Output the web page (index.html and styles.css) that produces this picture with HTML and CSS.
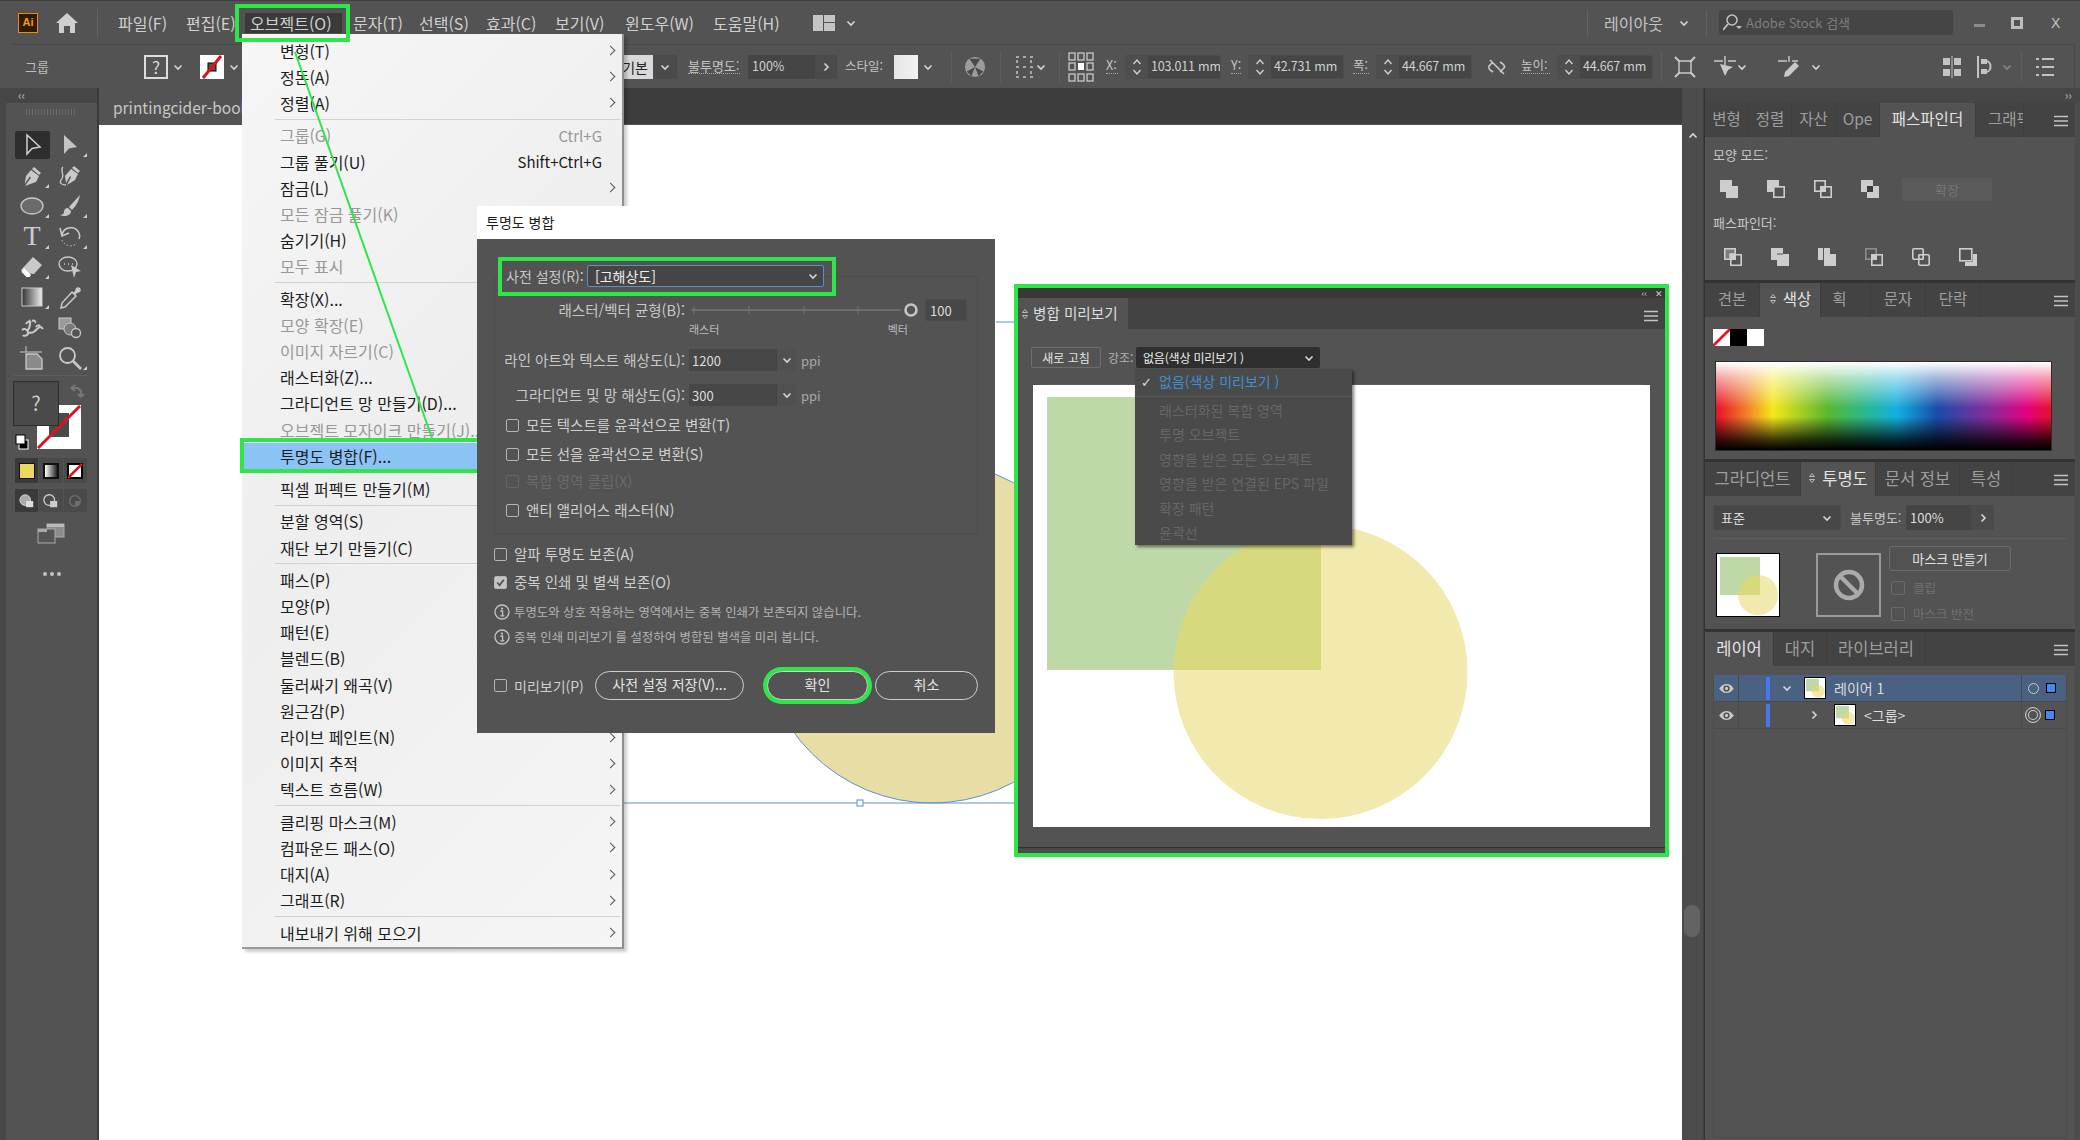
FILE: index.html
```html
<!DOCTYPE html>
<html lang="ko">
<head>
<meta charset="utf-8">
<title>투명도 병합</title>
<link rel="stylesheet" href="styles.css">
</head>
<body>
<svg class="defs" aria-hidden="true">
  <defs>
    <clipPath id="thumbclip"><rect x="3" y="3" width="40" height="38"/></clipPath>
    <clipPath id="prevclip"><rect x="14" y="12" width="274" height="273"/></clipPath>
    <symbol id="cd" viewBox="0 0 12 12"><path d="M2.5 4.5 6 8l3.5-3.5" fill="none" stroke="#d6d6d6" stroke-width="1.6"/></symbol>
    <symbol id="cr" viewBox="0 0 12 12"><path d="M4.5 2.5 8 6l-3.5 3.5" fill="none" stroke="#d6d6d6" stroke-width="1.6"/></symbol>
    <symbol id="menu3" viewBox="0 0 14 12"><path d="M0 1.5h14M0 6h14M0 10.500h14" stroke="#c4c4c4" stroke-width="1.6"/></symbol>
    <symbol id="eye" viewBox="0 0 18 12"><path d="M1 6c2.500-3.500 5-5 8-5s5.500 1.500 8 5c-2.500 3.500-5 5-8 5S3.500 9.500 1 6Z" fill="#c9c9c9"/><circle cx="9" cy="6" r="3.400" fill="#4a4a4a"/><circle cx="9" cy="6" r="1.800" fill="#c9c9c9"/></symbol>
    <symbol id="art" viewBox="0 0 62 62">
      <rect width="62" height="62" fill="#fff"/>
      <circle cx="41" cy="41" r="20" fill="#f2e9ae"/>
      <rect x="3" y="3" width="40" height="38" fill="#bfd8a8"/>
      <circle cx="41" cy="41" r="20" fill="#d7d97f" clip-path="url(#thumbclip)"/>
    </symbol>
    <symbol id="info" viewBox="0 0 16 16"><circle cx="8" cy="8" r="7" fill="none" stroke="#c4c4c4" stroke-width="1.300"/><circle cx="8" cy="4.600" r="1.100" fill="#c4c4c4"/><path d="M6.300 7h2.300v4.500M6.300 11.800h4" fill="none" stroke="#c4c4c4" stroke-width="1.300"/></symbol>
    <symbol id="stepper" viewBox="0 0 12 22"><path d="M2.500 8 6 4l3.500 4M2.500 14 6 18l3.500-4" fill="none" stroke="#d0d0d0" stroke-width="1.400"/></symbol>
    <symbol id="updown" viewBox="0 0 8 14"><path d="M1.500 5.500 4 2.500l2.500 3ZM1.500 8.500 4 11.500l2.500-3Z" fill="none" stroke="#bbb"/></symbol>
    <!-- pathfinder -->
    <symbol id="pf1" viewBox="0 0 18 18"><path d="M0 0h12v6h6v12H6v-6H0Z" fill="#cdcdcd"/></symbol>
    <symbol id="pf2" viewBox="0 0 18 18"><path d="M0 0h12v6H6v6H0Z" fill="#cdcdcd"/><rect x="6.800" y="6.800" width="10.400" height="10.400" fill="none" stroke="#cdcdcd" stroke-width="1.600"/></symbol>
    <symbol id="pf3" viewBox="0 0 18 18"><rect x=".8" y=".8" width="10.400" height="10.400" fill="none" stroke="#cdcdcd" stroke-width="1.600"/><rect x="6.800" y="6.800" width="10.400" height="10.400" fill="none" stroke="#cdcdcd" stroke-width="1.600"/><rect x="6" y="6" width="6" height="6" fill="#cdcdcd"/></symbol>
    <symbol id="pf4" viewBox="0 0 18 18"><path d="M0 0h12v6h6v12H6v-6H0Z" fill="#cdcdcd"/><rect x="6" y="6" width="6" height="6" fill="#3c3c3c"/></symbol>
    <symbol id="pd1" viewBox="0 0 18 18"><path d="M.8.8h10.400v5.200h-5.200v5.200H.8Z" fill="#7b7b7b" stroke="#cdcdcd" stroke-width="1.600"/><rect x="6" y="6" width="6" height="6" fill="#cdcdcd"/><path d="M12 6.800h5.200v10.400H6.800V12" fill="none" stroke="#cdcdcd" stroke-width="1.600"/></symbol>
    <symbol id="pd2" viewBox="0 0 18 18"><path d="M0 0h12v6H6v6H0Z" fill="#cdcdcd"/><rect x="6" y="6" width="12" height="12" fill="#cdcdcd"/><path d="M6 6h6" stroke="#555"/></symbol>
    <symbol id="pd3" viewBox="0 0 18 18"><path d="M0 0h12v6h6v12H6v-6H0Z" fill="#cdcdcd"/><path d="M5.500 0v12" stroke="#555"/></symbol>
    <symbol id="pd4" viewBox="0 0 18 18"><rect x=".8" y=".8" width="10.400" height="10.400" fill="none" stroke="#8c8c8c" stroke-width="1.600"/><rect x="6.800" y="6.800" width="10.400" height="10.400" fill="none" stroke="#cdcdcd" stroke-width="1.600"/><rect x="6" y="6" width="6" height="6" fill="#cdcdcd"/></symbol>
    <symbol id="pd5" viewBox="0 0 18 18"><rect x=".8" y=".8" width="10.400" height="10.400" rx="1" fill="none" stroke="#cdcdcd" stroke-width="1.600"/><rect x="6.800" y="6.800" width="10.400" height="10.400" rx="1" fill="none" stroke="#cdcdcd" stroke-width="1.600"/><rect x="6.800" y="6.800" width="4.400" height="4.400" fill="none" stroke="#cdcdcd"/></symbol>
    <symbol id="pd6" viewBox="0 0 18 18"><rect x=".8" y=".8" width="12" height="12" fill="#535353" stroke="#cdcdcd" stroke-width="1.600"/><path d="M14 6h4v12H6v-4h8Z" fill="#cdcdcd"/></symbol>
    <!-- tools -->
    <symbol id="t-sel" viewBox="0 0 24 24"><path d="M6 2v19l5-5.500 8-1.500Z" fill="#2e2e2e" stroke="#d0d0d0" stroke-width="1.500"/></symbol>
    <symbol id="t-dir" viewBox="0 0 24 24"><path d="M6 2v19l5-5.500 8-1.500Z" fill="#c4c4c4"/></symbol>
    <symbol id="t-pen" viewBox="0 0 24 24"><path d="m14 3 7 6-2 2-7-6Z" fill="#c9c9c9"/><path d="m11 6 8 6-3 6-11 4 6-8.500-1.300-1-5 7.500L6 12Z" fill="#c9c9c9"/></symbol>
    <symbol id="t-curv" viewBox="0 0 24 24"><path d="m16 2 6 5-2 2-6-5Z" fill="#c9c9c9"/><path d="m13 5 7 5-3 6-8 5 4-8-1-1-4 7-1-7Z" fill="#c9c9c9"/><path d="M5 3C1 6 8 11 3 16c-2 3 1 5 5 5" fill="none" stroke="#c9c9c9" stroke-width="1.300"/></symbol>
    <symbol id="t-ell" viewBox="0 0 24 24"><ellipse cx="12" cy="12" rx="11" ry="8" fill="#6b6b6b" stroke="#c9c9c9" stroke-width="1.300"/></symbol>
    <symbol id="t-brush" viewBox="0 0 24 24"><path d="M22 1 11 13l3 3C19 11 21 6 22 1Z" fill="#c9c9c9"/><path d="M10 14c-3 0-4 2-4 4 0 2-2 3-4 3 4 2 11 1 11-4Z" fill="#c9c9c9"/></symbol>
    <symbol id="t-rot" viewBox="0 0 24 24"><path d="M4 11A9 9 0 0 1 21 9c1 2 1 4 0 6" fill="none" stroke="#c9c9c9" stroke-width="1.600"/><path d="m2 4 2 8 7-3" fill="none" stroke="#c9c9c9" stroke-width="1.600"/><path d="M4 16a9 9 0 0 0 15 3" fill="none" stroke="#c9c9c9" stroke-dasharray="1.500 2"/></symbol>
    <symbol id="t-era" viewBox="0 0 24 24"><path d="m13 2 9 8-8 9-11-1-2-3Z" fill="#c9c9c9"/><path d="m4 13 7 7-1.500 2-3 0-5-5Z" fill="#fff"/></symbol>
    <symbol id="t-pup" viewBox="0 0 24 24"><ellipse cx="10" cy="9" rx="9" ry="7" fill="none" stroke="#c9c9c9" stroke-width="1.400"/><path d="M6 9h1M10 9h1M14 9h1" stroke="#c9c9c9" stroke-width="1.600"/><path d="m13 10 10 6-5 1-2 6Z" fill="#c9c9c9"/></symbol>
    <linearGradient id="gr1" x1="0" x2="1" y1="0" y2="0"><stop offset="0" stop-color="#333"/><stop offset="1" stop-color="#eee"/></linearGradient>
    <symbol id="t-grad" viewBox="0 0 24 24"><rect x="2" y="3" width="20" height="18" fill="url(#gr1)" stroke="#c9c9c9"/></symbol>
    <symbol id="t-drop" viewBox="0 0 24 24"><path d="m15 8 2-2 1-3c1-1 3-1 4 0s1 3 0 4l-3 1-2 2-2-2Z" fill="#c9c9c9"/><path d="m14 7 4 4L7 22l-4 1 1-5Z" fill="none" stroke="#c9c9c9" stroke-width="1.500"/></symbol>
    <symbol id="t-blend" viewBox="0 0 24 24"><path d="M2 14c2-2 5-1 6 2s-4 5-5 3M9 4c2 2 1 7-1 10s4 4 7 1 5-6 8-2M12 5c2-1 4 0 3 2M6 8c1-2 3-3 5-2M16 11c1-2 3-2 4-1" fill="none" stroke="#c9c9c9" stroke-width="2"/></symbol>
    <symbol id="t-shape" viewBox="0 0 24 24"><rect x="1" y="2" width="12" height="11" fill="#9a9a9a" stroke="#c9c9c9"/><circle cx="12" cy="13" r="6" fill="#7a7a7a" stroke="#c9c9c9"/><circle cx="18" cy="17" r="4.500" fill="#535353" stroke="#c9c9c9" stroke-width="1.300"/></symbol>
    <symbol id="t-art" viewBox="0 0 24 24"><path d="M6 0v6H0M6 6h16" stroke="#c9c9c9" fill="none"/><path d="M6 8h11l5 5v10H6Z" fill="#8a8a8a" stroke="#c9c9c9" stroke-width="1.300"/></symbol>
    <symbol id="t-zoom" viewBox="0 0 24 24"><circle cx="9.500" cy="9.500" r="7.500" fill="none" stroke="#c9c9c9" stroke-width="1.800"/><path d="m15 15 8 8" stroke="#c9c9c9" stroke-width="2.600"/></symbol>
  </defs>
</svg>

<div class="app">
  <header class="menubar">
    <div class="logo">Ai</div>
    <svg class="home" viewBox="0 0 22 20"><path d="M11 0 0 10h3v10h5v-7h6v7h5V10h3Z" fill="#cfcfcf"/></svg>
    <div class="vsep homesep"></div>
    <nav class="menus">
      <span>파일(F)</span><span>편집(E)</span><span class="on">오브젝트(O)</span><span>문자(T)</span><span>선택(S)</span><span>효과(C)</span><span>보기(V)</span><span>윈도우(W)</span><span>도움말(H)</span>
    </nav>
    <svg class="wsicon" viewBox="0 0 22 16"><path d="M0 0h10v16H0ZM11 0h11v7H11ZM11 8h11v8H11Z" fill="#c4c4c4"/></svg>
    <svg class="ic12 ml10"><use href="#cd"/></svg>
    <div class="spring"></div>
    <div class="vsep tall"></div>
    <span class="layout">레이아웃</span>
    <svg class="ic12 ml10"><use href="#cd"/></svg>
    <div class="vsep tall end"></div>
    <div class="stock">
      <svg class="mag" viewBox="0 0 20 18"><circle cx="9" cy="6" r="5" fill="none" stroke="#c4c4c4" stroke-width="1.500"/><path d="M5 10 0 16" stroke="#c4c4c4" stroke-width="1.800"/><path d="m13 12 6 0-3 3Z" fill="#c4c4c4"/></svg>
      <span>Adobe Stock 검색</span>
    </div>
    <div class="winbtns"><i class="wmin"></i><i class="wmax"></i><b>X</b></div>
  </header>

  <div class="ctrlbar">
    <span class="c-group">그룹</span>
    <div class="qbox">?</div><svg class="ic12 mx"><use href="#cd"/></svg>
    <svg class="strokebox" viewBox="0 0 24 24"><rect width="24" height="24" fill="#fff"/><rect x="8" y="8" width="8" height="8" fill="#555" stroke="#000"/><path d="M3 23 21 1" stroke="#d9141c" stroke-width="3"/></svg><svg class="ic12 mx"><use href="#cd"/></svg>
    <div class="basic">기본</div><div class="chevbox"><svg class="ic12"><use href="#cd"/></svg></div>
    <span class="ulabel c-op">불투명도:</span>
    <div class="opbox"><span>100%</span><i><svg class="ic12"><use href="#cr"/></svg></i></div>
    <span class="c-style">스타일:</span>
    <div class="swatch"></div><svg class="ic12 mx"><use href="#cd"/></svg>
    <div class="vsep short ml13"></div>
    <svg class="globe" viewBox="0 0 24 24"><circle cx="12" cy="12" r="11" fill="#9c9c9c"/><path d="M12 12 6 3h12ZM12 12l9 5-5 5ZM12 12 3 17l5 5Z" fill="#4a4a4a"/></svg>
    <div class="vsep short ml14"></div>
    <svg class="ic20 ml14" viewBox="0 0 20 22"><path d="M1 1h3M8 1h3M15 1h3M1 11h3M8 11h3M15 11h3M1 21h3M8 21h3M15 21h3M2 4v3M2 15v3M16 4v3M16 15v3" stroke="#c4c4c4" stroke-width="1.500"/></svg>
    <svg class="ic12"><use href="#cd"/></svg>
    <div class="vsep short ml12"></div>
    <svg class="refpt" viewBox="0 0 26 30"><g fill="none" stroke="#c9c9c9" stroke-width="1.300"><rect x="1" y="1" width="6" height="7"/><rect x="10" y="1" width="6" height="7"/><rect x="19" y="1" width="6" height="7"/><rect x="1" y="11" width="6" height="7"/><rect x="19" y="11" width="6" height="7"/><rect x="1" y="22" width="6" height="7"/><rect x="10" y="22" width="6" height="7"/><rect x="19" y="22" width="6" height="7"/></g><rect x="10" y="11" width="6" height="7" fill="#fff"/></svg>
    <span class="ulabel c-x">X:</span>
    <div class="numbox"><svg class="step"><use href="#stepper"/></svg><span>103.011 mm</span></div>
    <span class="ulabel c-y">Y:</span>
    <div class="numbox"><svg class="step"><use href="#stepper"/></svg><span>42.731 mm</span></div>
    <span class="ulabel c-w">폭:</span>
    <div class="numbox"><svg class="step"><use href="#stepper"/></svg><span>44.667 mm</span></div>
    <svg class="link" viewBox="0 0 20 16"><path d="M6 3 2 7c-1 2 0 3 1 4l3 2M13 3l3 2c2 2 2 3 1 4l-4 4M3 1l14 14" fill="none" stroke="#c9c9c9" stroke-width="1.600"/></svg>
    <span class="ulabel c-h">높이:</span>
    <div class="numbox"><svg class="step"><use href="#stepper"/></svg><span>44.667 mm</span></div>
    <div class="vsep short ml8"></div>
    <svg class="ic22 ml12" viewBox="0 0 22 22"><path d="M5 5h12v12H5Z" fill="none" stroke="#c9c9c9" stroke-width="1.400"/><path d="M1 1l5 5M21 1l-5 5M1 21l5-5M21 21l-5-5" stroke="#c9c9c9" stroke-width="2"/></svg>
    <svg class="ic22 ml18" viewBox="0 0 22 22"><path d="M0 5h9M14 5h8M11 0v9" stroke="#c9c9c9" stroke-width="1.400"/><path d="m6 8 13 3-5 3-3 6Z" fill="#c9c9c9"/></svg>
    <svg class="ic12"><use href="#cd"/></svg>
    <svg class="ic22 ml30" viewBox="0 0 22 22"><path d="M0 5h9M14 5h6M11 0v6" stroke="#c9c9c9" stroke-width="1.400"/><path d="m17 6 4 4-10 10-5 1 1-5Z" fill="#c9c9c9"/></svg>
    <svg class="ic12 ml10"><use href="#cd"/></svg>
    <div class="spring"></div>
    <svg class="ic18" viewBox="0 0 18 22"><path d="M0 2h7v7H0ZM11 2h7v7h-7ZM0 13h7v7H0ZM11 13h7v7h-7Z" fill="#c4c4c4"/><path d="M9 0v22" stroke="#c4c4c4"/></svg>
    <svg class="ic18 ml16" viewBox="0 0 18 22"><path d="M1 0v22" stroke="#c4c4c4" stroke-width="2"/><path d="M4 3h6v5H4ZM4 13h6v5H4Z" fill="#c4c4c4"/><path d="M9 5c6 0 6 11 0 11" fill="none" stroke="#c4c4c4" stroke-width="2"/></svg>
    <svg class="ic12 dim ml6"><use href="#cd"/></svg>
    <div class="vsep short ml8"></div>
    <svg class="ic18 ml14" viewBox="0 0 18 20"><path d="M0 2h3M6 2h12M0 10h3M6 10h12M0 18h3M6 18h12" stroke="#c4c4c4" stroke-width="2"/></svg>
  </div>

  <div class="workarea">
    <aside class="toolbar">
      <div class="strip"><span>‹‹</span></div>
      <div class="grip"></div>
      <div class="tools">
        <div class="tool sel"><svg><use href="#t-sel"/></svg></div>
        <div class="tool more"><svg><use href="#t-dir"/></svg></div>
        <div class="tool more"><svg><use href="#t-pen"/></svg></div>
        <div class="tool"><svg><use href="#t-curv"/></svg></div>
        <div class="tool more"><svg><use href="#t-ell"/></svg></div>
        <div class="tool more"><svg><use href="#t-brush"/></svg></div>
        <div class="tool more ttext">T</div>
        <div class="tool more"><svg><use href="#t-rot"/></svg></div>
        <div class="tool more"><svg><use href="#t-era"/></svg></div>
        <div class="tool"><svg><use href="#t-pup"/></svg></div>
        <div class="tool more"><svg><use href="#t-grad"/></svg></div>
        <div class="tool"><svg><use href="#t-drop"/></svg></div>
        <div class="tool"><svg><use href="#t-blend"/></svg></div>
        <div class="tool"><svg><use href="#t-shape"/></svg></div>
        <div class="tool"><svg><use href="#t-art"/></svg></div>
        <div class="tool more"><svg><use href="#t-zoom"/></svg></div>
      </div>
      <div class="tsep"></div>
      <div class="fillstroke">
        <svg class="fs-stroke" viewBox="0 0 44 44"><rect width="44" height="44" fill="#fff"/><rect x="12" y="8" width="20" height="24" fill="#4a4a4a"/><path d="M1 43 43 1" stroke="#d9141c" stroke-width="3"/></svg>
        <div class="fs-fill">?</div>
        <svg class="fs-swap" viewBox="0 0 16 14"><path d="M1 4h7l3 3v6M1 4l4-3M1 4l4 3M11 13l-3-3M11 13l3-3" fill="none" stroke="#777" stroke-width="2"/></svg>
        <svg class="fs-def" viewBox="0 0 14 16"><rect x="4" y="6" width="9" height="9" fill="#000" stroke="#fff"/><rect x="1" y="1" width="9" height="9" fill="#fff" stroke="#000"/></svg>
      </div>
      <div class="modes">
        <div class="mode on"><i class="m-yellow"></i></div>
        <div class="mode"><i class="m-grad"></i></div>
        <div class="mode"><svg class="m-none" viewBox="0 0 16 16"><rect x="1" y="1" width="14" height="14" fill="#fff" stroke="#000" stroke-width="2"/><path d="M1 15 15 1" stroke="#d9141c" stroke-width="2.500"/></svg></div>
      </div>
      <div class="modes draw">
        <div class="mode on"><svg class="m-none" viewBox="0 0 18 16"><circle cx="7" cy="7" r="6" fill="#aaa" stroke="#ddd"/><rect x="8" y="8" width="8" height="7" fill="#ddd"/></svg></div>
        <div class="mode"><svg class="m-none" viewBox="0 0 18 16"><circle cx="7" cy="7" r="6" fill="none" stroke="#ccc" stroke-width="1.500"/><rect x="8" y="8" width="8" height="7" fill="#ccc"/></svg></div>
        <div class="mode"><svg class="m-none" viewBox="0 0 18 16"><circle cx="9" cy="8" r="6" fill="none" stroke="#707070" stroke-width="1.500"/><path d="M9 8h5v5H9Z" fill="#707070"/></svg></div>
      </div>
      <svg class="screen" viewBox="0 0 28 21"><rect x="10" y="1" width="17" height="13" fill="#8c8c8c" stroke="#aaa"/><path d="M10 1h17v3H10Z" fill="#bbb"/><rect x="1" y="6" width="17" height="14" fill="#555" stroke="#aaa"/><path d="M1 6h9v3H1Z" fill="#aaa"/></svg>
      <div class="dots"><i></i><i></i><i></i></div>
    </aside>

    <main class="center">
      <div class="doctabs"><div class="doctab">printingcider-book</div></div>
      <div class="canvas">
        <svg class="artwork" viewBox="0 0 1584 1015">
          <circle cx="833" cy="507.500" r="170.500" fill="#e7dea5" stroke="#5b8fd6"/>
          <path d="M524 678H920" stroke="#5b8fd6"/>
          <rect x="758" y="675" width="6" height="6" fill="#fff" stroke="#5b8fd6"/>
          <path d="M897 197h20" stroke="#5b8fd6"/>
        </svg>
      </div>
    </main>

    <div class="vscroll">
      <svg class="ic12"><use href="#cd"/></svg>
      <div class="vthumb"></div>
    </div>

    <aside class="right">
      <div class="strip rstrip"><span>››</span></div>
      <section class="panel p1">
        <div class="tabs">
          <span class="tab w44">변형</span><span class="tab w43">정렬</span><span class="tab w44">자산</span><span class="tab w44">Ope</span><span class="tab active w96">패스파인더</span><span class="tab w48 clip">그래픽</span>
          <svg class="pmenu"><use href="#menu3"/></svg>
        </div>
        <div class="p-body">
          <div class="plabel">모양 모드:</div>
          <div class="pfrow r1">
            <svg class="pf"><use href="#pf1"/></svg><svg class="pf"><use href="#pf2"/></svg><svg class="pf"><use href="#pf3"/></svg><svg class="pf"><use href="#pf4"/></svg>
            <div class="expand">확장</div>
          </div>
          <div class="plabel l2">패스파인더:</div>
          <div class="pfrow r2">
            <svg class="pf"><use href="#pd1"/></svg><svg class="pf"><use href="#pd2"/></svg><svg class="pf"><use href="#pd3"/></svg><svg class="pf"><use href="#pd4"/></svg><svg class="pf"><use href="#pd5"/></svg><svg class="pf"><use href="#pd6"/></svg>
          </div>
        </div>
      </section>
      <section class="panel p2">
        <div class="tabs">
          <span class="tab w55">견본</span><span class="tab active w61"><svg class="ud"><use href="#updown"/></svg>색상</span><span class="tab w50 stroke">획</span><span class="tab w55">문자</span><span class="tab w55">단락</span>
          <svg class="pmenu"><use href="#menu3"/></svg>
        </div>
        <div class="p-body">
          <div class="swatches">
            <svg class="sw" viewBox="0 0 16 16"><rect width="16" height="16" fill="#fff"/><path d="M0 16 16 0" stroke="#e0141c" stroke-width="2.500"/></svg><i class="sw black"></i><i class="sw white"></i>
          </div>
          <div class="spectrum"></div>
        </div>
      </section>
      <section class="panel p3">
        <div class="tabs">
          <span class="tab w96b">그라디언트</span><span class="tab active w75"><svg class="ud"><use href="#updown"/></svg>투명도</span><span class="tab w84">문서 정보</span><span class="tab w53">특성</span>
          <svg class="pmenu"><use href="#menu3"/></svg>
        </div>
        <div class="p-body">
          <div class="blendrow">
            <div class="blend"><span>표준</span><svg class="ic12"><use href="#cd"/></svg></div>
            <span class="oplabel">불투명도:</span>
            <div class="opfield"><span>100%</span><i><svg class="ic12"><use href="#cr"/></svg></i></div>
          </div>
          <div class="hline"></div>
          <div class="maskrow">
            <svg class="mthumb"><use href="#art"/></svg>
            <div class="nomask"><svg viewBox="0 0 32 32"><circle cx="16" cy="16" r="13" fill="none" stroke="#aaa" stroke-width="4.500"/><path d="M7 7l18 18" stroke="#aaa" stroke-width="4.500"/></svg></div>
            <div class="maskctl">
              <div class="maskbtn">마스크 만들기</div>
              <div class="mcheck"><i></i>클립</div>
              <div class="mcheck"><i></i>마스크 반전</div>
            </div>
          </div>
        </div>
      </section>
      <section class="panel p4">
        <div class="tabs">
          <span class="tab active w69">레이어</span><span class="tab w53b">대지</span><span class="tab w99">라이브러리</span>
          <svg class="pmenu"><use href="#menu3"/></svg>
        </div>
        <div class="p-body">
          <div class="layers">
            <div class="lrow cur">
              <div class="eyecell"><svg><use href="#eye"/></svg></div>
              <i class="lbar"></i>
              <svg class="ic12 lchev"><use href="#cd"/></svg>
              <svg class="lthumb"><use href="#art"/></svg>
              <span class="lname">레이어 1</span>
              <div class="ltail"><i class="ring"></i><i class="lsq"></i></div>
            </div>
            <div class="lrow sub">
              <div class="eyecell"><svg><use href="#eye"/></svg></div>
              <i class="lbar"></i>
              <svg class="ic12 lchev"><use href="#cr"/></svg>
              <svg class="lthumb"><use href="#art"/></svg>
              <span class="lname">&lt;그룹&gt;</span>
              <div class="ltail"><i class="ring dbl"></i><i class="lsq"></i></div>
            </div>
          </div>
        </div>
      </section>
    </aside>
  </div>
</div>

<div class="objmenu">
  <div class="mi"><span>변형(T)</span><i class="arr"></i></div>
  <div class="mi"><span>정돈(A)</span><i class="arr"></i></div>
  <div class="mi"><span>정렬(A)</span><i class="arr"></i></div>
  <hr>
  <div class="mi dis"><span>그룹(G)</span><em>Ctrl+G</em></div>
  <div class="mi"><span>그룹 풀기(U)</span><em>Shift+Ctrl+G</em></div>
  <div class="mi"><span>잠금(L)</span><i class="arr"></i></div>
  <div class="mi dis"><span>모든 잠금 풀기(K)</span></div>
  <div class="mi"><span>숨기기(H)</span><i class="arr"></i></div>
  <div class="mi dis"><span>모두 표시</span></div>
  <hr>
  <div class="mi"><span>확장(X)...</span></div>
  <div class="mi dis"><span>모양 확장(E)</span></div>
  <div class="mi dis"><span>이미지 자르기(C)</span></div>
  <div class="mi"><span>래스터화(Z)...</span></div>
  <div class="mi"><span>그라디언트 망 만들기(D)...</span></div>
  <div class="mi dis"><span>오브젝트 모자이크 만들기(J)...</span></div>
  <div class="mi hot"><span>투명도 병합(F)...</span></div>
  <div class="mi"><span>픽셀 퍼펙트 만들기(M)</span></div>
  <hr>
  <div class="mi"><span>분할 영역(S)</span></div>
  <div class="mi"><span>재단 보기 만들기(C)</span></div>
  <hr>
  <div class="mi"><span>패스(P)</span><i class="arr"></i></div>
  <div class="mi"><span>모양(P)</span><i class="arr"></i></div>
  <div class="mi"><span>패턴(E)</span><i class="arr"></i></div>
  <div class="mi"><span>블렌드(B)</span><i class="arr"></i></div>
  <div class="mi"><span>둘러싸기 왜곡(V)</span><i class="arr"></i></div>
  <div class="mi"><span>원근감(P)</span><i class="arr"></i></div>
  <div class="mi"><span>라이브 페인트(N)</span><i class="arr"></i></div>
  <div class="mi"><span>이미지 추적</span><i class="arr"></i></div>
  <div class="mi"><span>텍스트 흐름(W)</span><i class="arr"></i></div>
  <hr>
  <div class="mi"><span>클리핑 마스크(M)</span><i class="arr"></i></div>
  <div class="mi"><span>컴파운드 패스(O)</span><i class="arr"></i></div>
  <div class="mi"><span>대지(A)</span><i class="arr"></i></div>
  <div class="mi"><span>그래프(R)</span><i class="arr"></i></div>
  <hr>
  <div class="mi"><span>내보내기 위해 모으기</span><i class="arr"></i></div>
</div>

<div class="menubox"></div>
<svg class="connector" viewBox="0 0 170 410"><path d="M5 2 142 388" stroke="#2ee64a" stroke-width="2"/></svg>

<div class="dialog">
  <div class="dtitle">투명도 병합</div>
  <div class="dbody">
    <div class="frame">
      <div class="drow preset">
        <span class="plab">사전 설정(R):</span>
        <div class="pselect"><span>[고해상도]</span><svg class="ic12"><use href="#cd"/></svg></div>
      </div>
      <div class="drow srow">
        <span class="rlab">래스터/벡터 균형(B):</span>
        <svg class="slider" viewBox="0 0 236 22"><path d="M2 11H212" stroke="#747474" stroke-width="1.500"/><path d="M5 7v8M60 7v8M115 7v8M169 7v8" stroke="#747474"/><circle cx="222" cy="11" r="5.500" fill="none" stroke="#c4c4c4" stroke-width="2.600"/></svg>
        <div class="numin">100</div>
      </div>
      <div class="scale"><span>래스터</span><span>벡터</span></div>
      <div class="drow res r-a">
        <span class="rlab">라인 아트와 텍스트 해상도(L):</span>
        <div class="combo"><span>1200</span><i><svg class="ic12"><use href="#cd"/></svg></i></div>
        <span class="unit">ppi</span>
      </div>
      <div class="drow res r-b">
        <span class="rlab">그라디언트 및 망 해상도(G):</span>
        <div class="combo"><span>300</span><i><svg class="ic12"><use href="#cd"/></svg></i></div>
        <span class="unit">ppi</span>
      </div>
      <label class="chk c1"><i class="cb"></i>모든 텍스트를 윤곽선으로 변환(T)</label>
      <label class="chk c2"><i class="cb"></i>모든 선을 윤곽선으로 변환(S)</label>
      <label class="chk c3 off"><i class="cb"></i>복합 영역 클립(X)</label>
      <label class="chk c2"><i class="cb"></i>앤티 앨리어스 래스터(N)</label>
    </div>
    <label class="chk c4"><i class="cb"></i>알파 투명도 보존(A)</label>
    <label class="chk c5"><i class="cb checked"><svg viewBox="0 0 12 12"><path d="m2.500 6 2.500 3 4.500-6" fill="none" stroke="#535353" stroke-width="2"/></svg></i>중복 인쇄 및 별색 보존(O)</label>
    <div class="note n1"><svg><use href="#info"/></svg>투명도와 상호 작용하는 영역에서는 중복 인쇄가 보존되지 않습니다.</div>
    <div class="note n2"><svg><use href="#info"/></svg>중복 인쇄 미리보기 를 설정하여 병합된 별색을 미리 봅니다.</div>
    <div class="dfoot">
      <label class="chk c6"><i class="cb"></i>미리보기(P)</label>
      <div class="pill save">사전 설정 저장(V)...</div>
      <div class="pill ok">확인</div>
      <div class="pill cancel">취소</div>
    </div>
  </div>
</div>

<div class="preview">
  <div class="pv-strip"><span>‹‹</span><b>✕</b></div>
  <div class="pv-tabs">
    <div class="pv-tab"><svg class="ud"><use href="#updown"/></svg>병합 미리보기</div>
    <svg class="pmenu"><use href="#menu3"/></svg>
  </div>
  <div class="pv-body">
    <div class="pv-tools">
      <div class="pv-btn">새로 고침</div>
      <span class="pv-lab">강조:</span>
      <div class="pv-sel"><span>없음(색상 미리보기 )</span><svg class="ic12"><use href="#cd"/></svg></div>
    </div>
    <div class="pv-img">
      <svg viewBox="0 0 617 442">
        <circle cx="287.500" cy="287" r="147" fill="#f2e9ae"/>
        <rect x="14" y="12" width="274" height="273" fill="#bfd8a8"/>
        <circle cx="287.500" cy="287" r="147" fill="#d7d97f" clip-path="url(#prevclip)"/>
      </svg>
    </div>
  </div>
  <div class="pv-foot"></div>
  <div class="pv-drop">
    <div class="pd cur">없음(색상 미리보기 )</div>
    <div class="pd-sep"></div>
    <div class="pd">래스터화된 복합 영역</div>
    <div class="pd">투명 오브젝트</div>
    <div class="pd">영향을 받은 모든 오브젝트</div>
    <div class="pd">영향을 받은 연결된 EPS 파일</div>
    <div class="pd">확장 패턴</div>
    <div class="pd">윤곽선</div>
  </div>
</div>
</body>
</html>
```
FILE: styles.css
```css
*, *::before, *::after { box-sizing: border-box; }
html, body { margin: 0; padding: 0; }
body {
  width: 2080px; height: 1140px; overflow: hidden; position: relative;
  background: #535353; color: #d0d0d0;
  font-family: "Noto Sans CJK KR", "Noto Sans", sans-serif;
  font-size: 14px; line-height: 1;
}
i, em { font-style: normal; display: block; }
svg { display: block; flex: none; }
.defs { position: absolute; width: 0; height: 0; }
.app { display: flex; flex-direction: column; height: 1140px; }

.ic12 { width: 12px; height: 12px; }
.ic18 { width: 18px; height: 22px; }
.ic20 { width: 20px; height: 22px; }
.ic22 { width: 22px; height: 22px; }
.dim { opacity: .4; }
.spring { flex: 1; }

/* menu bar */
.menubar { height: 44px; display: flex; align-items: center; padding-left: 18px; border-top: 1px solid #3e3e3e; }
.logo { width: 20px; height: 20px; background: #2d1a00; border: 1.500px solid #f08c00; color: #ff9a00; font: 700 11px/17px "Liberation Sans", sans-serif; text-align: center; }
.home { width: 22px; height: 20px; margin-left: 18px; }
.vsep { width: 1px; height: 28px; background: #636363; flex: none; }
.homesep { margin-left: 19px; }
.vsep.tall { height: 26px; margin-right: 16px; }
.vsep.tall.end { margin-left: 16px; margin-right: 12px; }
.vsep.short { height: 30px; background: #5e5e5e; }
.ml6 { margin-left: 6px; } .ml8 { margin-left: 8px; } .ml10 { margin-left: 10px; }
.ml12 { margin-left: 12px; } .ml13 { margin-left: 13px; } .ml14 { margin-left: 14px; } .ml16 { margin-left: 16px; }
.ml18 { margin-left: 18px; } .ml30 { margin-left: 30px; }
.mx { margin: 0 4px; }
.menus { display: grid; grid-template-columns: 68px 64px 103px 66px 67px 69px 70px 88px 100px; margin-left: 20px; font-size: 16px; color: #d0d0d0; white-space: nowrap; }
.menus span { line-height: 20px; }
.menus .on { background: #3a3a3a; margin-left: -5px; padding-left: 5px; margin-right: 11px; }
.wsicon { width: 22px; height: 16px; }
.layout { font-size: 16px; width: 64px; color: #c4c4c4; white-space: nowrap; }
.stock { width: 234px; height: 25px; background: #454545; display: flex; align-items: center; padding-left: 4px; color: #7d7d7d; font-size: 13px; gap: 3px; border-radius: 2px; }
.mag { width: 20px; height: 18px; }
.winbtns { width: 106px; height: 24px; display: flex; align-items: center; margin: 0 0 0 21px; color: #c4c4c4; }
.wmin { width: 11px; height: 3px; margin: 6px 0 0 0; background: #8c8c8c; }
.wmax { width: 12px; height: 12px; border: 3px solid #bdbdbd; margin-left: 26px; }
.winbtns b { font: 400 14px "Liberation Sans", sans-serif; margin-left: 28px; }

/* control bar */
.ctrlbar { height: 44px; margin: 0 5px 0 12px; padding-right: 20px; display: flex; align-items: center; border: 1px solid #484848; border-width: 1px 1px 0 0; font-size: 12.500px; color: #c4c4c4; }
.c-group { margin: 0 94px 0 13px; width: 25px; font-size: 13px; color: #bdbdbd; }
.qbox { width: 24px; height: 24px; border: 2px solid #ddd; background: #555; text-align: center; line-height: 20px; font-size: 17px; color: #ddd; flex: none; }
.strokebox { width: 24px; height: 24px; margin-left: 12px; }
.basic { margin-left: 377px; width: 32px; height: 24px; background: #d9d9d9; color: #222; text-align: right; line-height: 24px; font-size: 14px; padding-right: 5px; flex: none; }
.chevbox { width: 24px; height: 24px; display: flex; align-items: center; justify-content: center; background: #4b4b4b; flex: none; }
.ulabel { border-bottom: 1px dotted #aaa; padding-bottom: 1px; color: #c4c4c4; flex: none; }
.c-op { margin-left: 11px; width: 52px; font-size: 13px; white-space: nowrap; }
.opbox { margin-left: 8px; width: 89px; height: 24px; background: #454545; display: flex; align-items: center; justify-content: space-between; padding-left: 4px; flex: none; color: #d0d0d0; }
.opbox i { width: 22px; height: 24px; background: #4b4b4b; display: flex; align-items: center; justify-content: center; }
.c-style { margin-left: 8px; width: 41px; font-size: 12.500px; flex: none; white-space: nowrap; }
.swatch { width: 24px; height: 24px; margin-left: 8px; background: linear-gradient(90deg, #e6e6e6, #f2f2f2); flex: none; }
.globe { width: 22px; height: 24px; margin-left: 12px; }
.refpt { width: 26px; height: 30px; margin-left: 8px; }
.c-x { margin-left: 12px; width: 12px; }
.c-y { margin-left: 10px; width: 10px; }
.c-w { margin-left: 9px; width: 16px; }
.c-h { margin-left: 14px; width: 29px; white-space: nowrap; }
.numbox { margin-left: 7px; width: 96px; height: 24px; display: flex; align-items: center; overflow: hidden; white-space: nowrap; background: #454545; border: 1px solid #4d4d4d; flex: none; color: #d0d0d0; }
.numbox span { letter-spacing: -.2px; }
.step { width: 22px; height: 22px; background: #4e4e4e; padding: 0 5px; margin-right: 3px; }
.link { width: 20px; height: 16px; margin-left: 15px; }

/* work area */
.workarea { flex: 1; display: flex; min-height: 0; }
.toolbar { width: 99px; background: #535353; border-right: 2px solid #3a3a3a; border-left: 6px solid #474747; flex: none; display: flex; flex-direction: column; }
.strip { height: 15px; background: #464646; color: #bbb; font-size: 12px; line-height: 14px; padding-left: 12px; flex: none; }
.grip { height: 12px; margin: 3px 20px 0; background: repeating-linear-gradient(90deg, #6b6b6b 0 1px, transparent 1px 3px); transform: scaleY(.5); flex: none; }
.tools { display: grid; grid-template-columns: 38px 38px; grid-auto-rows: 30.400px; margin: 12px 0 0 7px; }
.tool { position: relative; display: flex; align-items: center; justify-content: center; }
.tool svg { width: 24px; height: 24px; }
.tool.sel { background: #2e2e2e; border-radius: 2px; width: 35px; height: 28px; margin-left: 2px; margin-top: 1px; }
.tool.more::after { content: ""; position: absolute; right: 2px; bottom: 3px; width: 4px; height: 4px; border: 2px solid transparent; border-right-color: #ccc; border-bottom-color: #ccc; }
.ttext { font: 400 28px "Liberation Serif", serif; color: #ccc; }
.tsep { height: 1px; margin: 2px 8px 0; background: #5e5e5e; flex: none; }
.fillstroke { position: relative; height: 77px; margin-top: 5px; flex: none; }
.fs-stroke { position: absolute; left: 31px; top: 24px; width: 44px; height: 44px; }
.fs-fill { position: absolute; left: 7px; top: 0; width: 46px; height: 45px; background: #4a4a4a; border: 1px solid #2d2d2d; text-align: center; line-height: 42px; font-size: 20px; color: #ccc; }
.fs-swap { position: absolute; left: 64px; top: 3px; width: 16px; height: 14px; }
.fs-def { position: absolute; left: 9px; top: 53px; width: 14px; height: 16px; }
.modes { display: flex; height: 25px; margin: 0 0 0 9px; width: 73px; background: #4a4a4a; flex: none; }
.modes.draw { margin-top: 6px; height: 23px; }
.mode { flex: 1; display: flex; align-items: center; justify-content: center; border-right: 1px solid #535353; }
.mode.on { background: #3a3a3a; }
.m-yellow { width: 16px; height: 16px; background: #ecd85e; border: 1px solid #111; }
.m-grad { width: 16px; height: 16px; background: linear-gradient(90deg, #fff, #222); border: 2px solid #111; }
.m-none { width: 16px; height: 16px; }
.screen { width: 28px; height: 21px; margin: 11px 0 0 31px; flex: none; }
.dots { display: flex; gap: 3px; margin: 28px 0 0 37px; }
.dots i { width: 4px; height: 4px; border-radius: 50%; background: #c4c4c4; }

.center { flex: 1; display: flex; flex-direction: column; min-width: 0; }
.doctabs { height: 37px; background: #3d3d3d; border-bottom: 1px solid #555; flex: none; }
.doctab { height: 36px; width: 240px; background: #535353; padding: 12px 0 0 14px; font-size: 15.500px; color: #c8c8c8; white-space: nowrap; overflow: hidden; }
.canvas { flex: 1; background: #fff; position: relative; overflow: hidden; }
.artwork { position: absolute; left: 0; top: 0; width: 1584px; height: 1015px; }

.vscroll { width: 22px; background: #4c4c4c; flex: none; position: relative; border-right: 1px solid #404040; }
.vscroll > svg { position: absolute; left: 5px; top: 42px; transform: rotate(180deg); }
.vthumb { position: absolute; left: 2px; top: 817px; width: 16px; height: 32px; border-radius: 8px; background: #636363; }

/* right */
.right { width: 376px; flex: none; background: #4c4c4c; border-left: 1px solid #333; padding-right: 5px; display: flex; flex-direction: column; }
.rstrip { text-align: right; padding-right: 8px; margin-right: -5px; }
.panel { background: #535353; border-bottom: 3px solid #333; flex: none; }
.p1 { height: 180px; }
.p2 { height: 179px; }
.p3 { height: 170px; }
.p4 { flex: 1; border-bottom: 0; }
.tabs { height: 34px; background: #434343; display: flex; position: relative; color: #9e9e9e; font-size: 15.500px; }
.p3 .tabs, .p4 .tabs { font-size: 16.500px; }
.tab { display: flex; align-items: center; justify-content: center; border-right: 1px solid #3d3d3d; white-space: nowrap; overflow: hidden; padding-bottom: 2px; }
.tab.active { background: #535353; color: #e4e4e4; }
.tab.clip { justify-content: flex-start; padding-left: 12px; }
.tab.stroke { padding-right: 12px; }
.w44 { width: 44px; } .w43 { width: 43px; } .w96 { width: 96px; } .w48 { width: 48px; }
.w55 { width: 55px; } .w61 { width: 61px; } .w50 { width: 50px; } .w96b { width: 96px; }
.w75 { width: 75px; } .w84 { width: 84px; } .w53 { width: 53px; } .w69 { width: 69px; }
.w53b { width: 53px; } .w99 { width: 99px; }
.pmenu { position: absolute; right: 7px; top: 12px; width: 14px; height: 12px; }
.ud { width: 8px; height: 14px; margin-right: 6px; }
.p-body { padding: 0 8px; }
.plabel { font-size: 13px; color: #c8c8c8; padding-top: 11px; height: 27px; }
.plabel.l2 { padding-top: 11px; height: 27px; margin-top: 0; }
.pfrow { display: flex; align-items: center; }
.pfrow.r1 { gap: 29px; padding-left: 7px; height: 32px; margin-top: 9px; }
.pfrow.r2 { gap: 29px; padding-left: 11px; height: 32px; margin-top: 9px; }
.pf { width: 18px; height: 18px; }
.expand { width: 90px; height: 23px; background: #5a5a5a; color: #767676; text-align: center; line-height: 23px; font-size: 13px; margin-left: -6px; }
.swatches { display: flex; padding-top: 12px; }
.sw { width: 17px; height: 17px; }
.black { background: #000; }
.white { background: #fff; }
.spectrum { width: 337px; height: 90px; margin: 15px 0 0 2px; border: 1px solid #2c2c2c;
  background:
    linear-gradient(180deg, #fff 0%, rgba(255,255,255,.6) 18%, rgba(255,255,255,0) 52%, rgba(0,0,0,0) 62%, rgba(0,0,0,.75) 88%, #000 100%),
    linear-gradient(90deg, #e8102a 0%, #f0702a 8%, #f5e81a 17%, #5cb82e 33%, #2ab88c 44%, #13b0e0 54%, #1a4ca8 66%, #8a2a9a 82%, #e6007e 93%, #e8102a 100%); }
.blendrow { display: flex; align-items: center; height: 25px; margin-top: 9px; }
.blend { width: 128px; height: 25px; background: #474747; border: 1px solid #4c4c4c; border-radius: 2px; display: flex; align-items: center; justify-content: space-between; padding: 0 7px; font-size: 13px; color: #ddd; }
.oplabel { margin-left: 9px; font-size: 13px; width: 56px; color: #c8c8c8; white-space: nowrap; }
.opfield { width: 88px; height: 25px; background: #454545; display: flex; align-items: center; justify-content: space-between; padding-left: 4px; font-size: 13px; color: #ddd; border-radius: 2px; }
.opfield i { width: 23px; height: 25px; background: #4b4b4b; display: flex; align-items: center; justify-content: center; }
.hline { height: 1px; background: #5d5d5d; margin-top: 8px; }
.maskrow { display: flex; margin-top: 7px; align-items: flex-start; }
.mthumb { width: 64px; height: 64px; margin: 7px 0 0 3px; border: 1px solid #000; outline: 1px solid #000; outline-offset: -1px; }
.nomask { width: 65px; height: 64px; margin: 7px 0 0 36px; border: 2px solid #9a9a9a; display: flex; align-items: center; justify-content: center; }
.nomask svg { width: 32px; height: 32px; }
.maskctl { margin-left: 8px; }
.maskbtn { width: 122px; height: 25px; border: 1px solid #6c6c6c; border-radius: 3px; text-align: center; line-height: 23px; font-size: 13px; color: #e4e4e4; }
.mcheck { display: flex; align-items: center; gap: 8px; font-size: 12.500px; color: #717171; height: 16px; margin: 9px 0 0 2px; }
.mcheck + .mcheck { margin-top: 10px; }
.mcheck i { width: 14px; height: 14px; border: 1px solid #6a6a6a; border-radius: 2px; }
.layers { margin-top: 9px; border: 1px solid #4c4c4c; border-top: 0; height: 463px; }
.lrow { height: 27px; display: flex; align-items: center; border-bottom: 1px solid #4a4a4a; font-size: 14px; color: #ddd; position: relative; }
.lrow.cur { background: #4a6181; }
.eyecell { width: 25px; height: 100%; display: flex; align-items: center; justify-content: center; border-right: 1px solid #4a4a4a; }
.eyecell svg { width: 17px; height: 11px; }
.lbar { width: 4px; height: 23px; background: #4578ec; margin-left: 27px; }
.lchev { margin-left: 11px; }
.lthumb { width: 22px; height: 22px; border: 1px solid #000; outline: 1px solid #000; outline-offset: -1px; margin-left: 11px; }
.sub .lchev { margin-left: 38px; }
.sub .lthumb { margin-left: 14px; }
.lname { margin-left: 8px; }
.ltail { position: absolute; right: 0; top: 0; height: 100%; width: 45px; display: flex; align-items: center; border-left: 1px solid #4a4a4a; padding-left: 4px; gap: 7px; }
.cur .ltail { background: #4a6181; }
.ring { width: 11px; height: 11px; border-radius: 50%; border: 1px solid #ccc; margin-left: 2px; }
.ring.dbl { width: 16px; height: 16px; margin-left: -1px; margin-right: -3px; box-shadow: inset 0 0 0 2px #535353, inset 0 0 0 3px #ccc; }
.lsq { width: 10px; height: 10px; background: #4a86f0; border: 1px solid #000; }

/* object menu */
.objmenu { position: absolute; left: 242px; top: 34px; width: 382px; height: 915px; padding: 3.500px 0 0; background: linear-gradient(135deg, #f6f6f6 0%, #eeeeee 45%, #f5f5f5 100%); border-right: 2px solid #8d8d8d; border-bottom: 2px solid #9a9a9a; color: #1c1c1c; font-size: 16px; box-shadow: 3px 3px 3px rgba(0,0,0,.2); }
.objmenu hr { margin: 2.600px 2px 2.600px 33px; border: 0; border-top: 1px solid #d2d2d2; height: 1px; }
.mi { height: 26.200px; display: flex; align-items: center; padding: 0 20px 0 38px; position: relative; white-space: nowrap; }
.mi.dis { color: #989898; }
.mi em { margin-left: auto; font-size: 15px; }
.mi .arr { margin-left: auto; margin-right: -12px; width: 7px; height: 7px; border-top: 1px solid #555; border-right: 1px solid #555; transform: rotate(45deg); }
.mi.hot { background: #8bc3f5; margin-bottom: 7px; }
.mi.hot::after { content: ""; position: absolute; left: -2px; top: -5px; width: 260px; height: 35px; border: 4px solid #2ee64a; }
.menubox { position: absolute; left: 235px; top: 4px; width: 115px; height: 38px; border: 4px solid #2ee64a; }
.connector { position: absolute; left: 290px; top: 50px; width: 170px; height: 410px; }

/* dialog */
.dialog { position: absolute; left: 477px; top: 206px; width: 518px; height: 527px; background: #535353; color: #c8c8c8; }
.dtitle { height: 33px; background: #fff; color: #1c1c1c; font-size: 14px; line-height: 33px; padding-left: 9px; }
.dbody { padding: 37px 17px 0; }
.frame { height: 258px; border: 1px solid #4d4d4d; padding-left: 11px; }
.drow { display: flex; align-items: center; height: 22px; }
.preset { margin-top: -12px; position: relative; }
.preset::before { content: ""; position: absolute; left: -8px; top: -8px; width: 338px; height: 39px; border: 4px solid #2ee64a; }
.plab { width: 81px; white-space: nowrap; }
.pselect { width: 237px; height: 22px; border: 1px solid #5c8fc6; border-radius: 2px; background: #454545; color: #eee; display: flex; align-items: center; justify-content: space-between; padding: 0 4px 0 7px; }
.srow { margin-top: 12px; }
.rlab { width: 179px; text-align: right; white-space: nowrap; margin-right: 4px; flex: none; font-size: 14.500px; display: flex; justify-content: flex-end; }
.slider { width: 236px; height: 22px; }
.numin { width: 42px; height: 22px; background: #474747; border: 1px solid #4d4d4d; color: #ddd; font-size: 13px; line-height: 22px; padding-left: 4px; }
.scale { display: flex; justify-content: space-between; width: 219px; margin-left: 183px; font-size: 11px; color: #bbb; height: 16px; line-height: 16px; }
.res { margin-top: 12px; }
.r-b { margin-top: 13px; }
.combo { width: 107px; height: 22px; background: #474747; display: flex; align-items: center; justify-content: space-between; padding-left: 3px; color: #ddd; font-size: 13px; }
.combo i { width: 20px; height: 22px; background: #505050; display: flex; align-items: center; justify-content: center; border-left: 1px solid #444; }
.unit { margin-left: 5px; color: #a8a8a8; font-size: 13px; }
.chk { display: flex; align-items: center; height: 20px; gap: 7px; color: #cfcfcf; white-space: nowrap; font-size: 14.500px; }
.chk .cb { width: 13px; height: 13px; border: 1px solid #b5b5b5; border-radius: 2px; flex: none; }
.chk .cb.checked { background: #c4c4c4; }
.c1 { margin-top: 9px; }
.c2 { margin-top: 9px; }
.c3 { margin-top: 7px; color: #6a6a6a; }
.c3 .cb { border-color: #646464; }
.c4 { margin-top: 10px; }
.c5 { margin-top: 8px; }
.note { display: flex; align-items: center; height: 18px; gap: 4px; font-size: 12.400px; color: #b4b4b4; white-space: nowrap; }
.note svg { width: 16px; height: 16px; }
.n1 { margin-top: 11px; }
.n2 { margin-top: 7px; }
.dfoot { display: flex; align-items: center; margin-top: 25px; height: 29px; }
.c6 { width: 101px; flex: none; font-size: 14px; }
.pill { height: 29px; border: 1.500px solid #cfcfcf; border-radius: 15px; text-align: center; line-height: 25px; font-size: 14px; color: #e4e4e4; flex: none; }
.save { width: 149px; }
.ok { width: 101px; margin-left: 23px; background: #535353; box-shadow: 0 0 0 4px #2ee64a; }
.cancel { width: 103px; margin-left: 7px; }

/* preview */
.preview { position: absolute; left: 1014px; top: 284px; width: 655px; height: 573px; border: 4px solid #2ee64a; background: #535353; display: flex; flex-direction: column; }
.pv-strip { height: 10px; background: #383838; display: flex; justify-content: flex-end; align-items: center; gap: 8px; padding-right: 2px; color: #ccc; font-size: 9px; flex: none; }
.pv-strip b { font-weight: 400; }
.pv-tabs { height: 31px; background: #434343; position: relative; flex: none; }
.pv-tab { width: 110px; height: 31px; background: #535353; display: flex; align-items: center; font-size: 14.600px; color: #dedede; padding-left: 3px; white-space: nowrap; }
.pv-tab .ud { margin-right: 4px; }
.pv-body { flex: 1; padding: 18px 15px 0 15px; min-height: 0; }
.pv-tools { display: flex; align-items: center; height: 21px; margin-left: -2px; }
.pv-btn { width: 70px; height: 21px; border: 1px solid #6e6e6e; border-radius: 2px; font-size: 12px; text-align: center; line-height: 19px; color: #e4e4e4; }
.pv-lab { font-size: 12px; width: 28px; margin-left: 7px; color: #b4b4b4; }
.pv-sel { width: 184px; height: 21px; background: #2f2f2f; border-radius: 2px; display: flex; align-items: center; justify-content: space-between; padding: 0 5px 0 7px; font-size: 12px; letter-spacing: -.2px; color: #eee; }
.pv-img { width: 617px; height: 442px; margin-top: 17px; background: #fff; box-shadow: 0 -9px 0 -8px #5e5e5e; }
.pv-img svg { width: 617px; height: 442px; }
.pv-foot { height: 6px; background: #4a4a4a; border-top: 1px solid #2f2f2f; flex: none; }
.pv-drop { position: absolute; left: 117px; top: 81px; width: 217px; height: 176px; background: #4a4a4a; box-shadow: 2px 2px 3px rgba(0,0,0,.5); padding-top: 0; }
.pd { height: 24.400px; line-height: 24.400px; padding-left: 24px; font-size: 14px; color: #666; white-space: nowrap; }
.pd.cur { height: 27px; line-height: 25px; color: #3e8ed0; position: relative; }
.pd.cur::before { content: "✓"; position: absolute; left: 6px; top: 0; color: #ddd; font: 700 13px/27px "DejaVu Sans", sans-serif; }
.pd-sep { height: 1px; background: #555; margin-bottom: 1px; }
```
